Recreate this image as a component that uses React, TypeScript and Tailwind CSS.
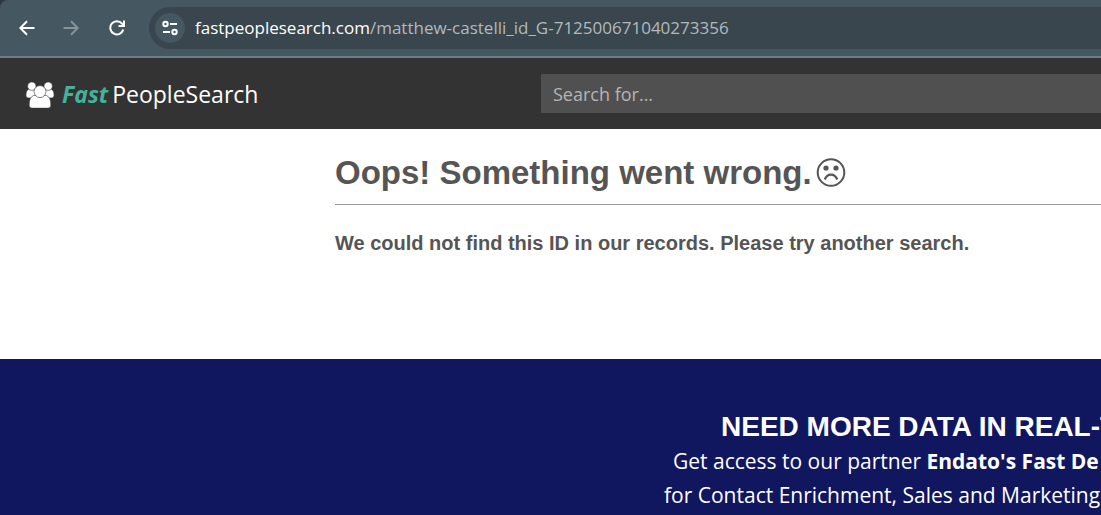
function PeopleIcon() {
  return (
    <svg viewBox="0 0 28 26" className="mt-0.5 h-[26px] w-7 shrink-0" fill="#fff" stroke="#333" strokeWidth="0.6" aria-hidden="true">
      <path d="M0 13.500C-.2 10.500.8 8.200 2.600 7.200h7c1.300 2 1.500 7.200-.2 8.800H3c-1.900 0-2.900-.8-3-2.500z" />
      <path d="M28 13.500c.2-3-.8-5.300-2.600-6.300h-7c-1.300 2-1.500 7.200.2 8.800H25c1.900 0 2.900-.8 3-2.500z" />
      <circle cx="5.800" cy="4.200" r="4.200" />
      <circle cx="22.200" cy="4.200" r="4.200" />
      <path d="M3.200 23.200C3 18 4.500 14.800 7.500 13.500h13c3 1.300 4.500 4.500 4.300 9.700-.1 2-1.200 3-3.300 3h-15c-2.100 0-3.200-1-3.300-3z" />
      <circle cx="14" cy="9.600" r="6" />
    </svg>
  );
}

function SadFace() {
  return (
    <svg viewBox="0 0 30 30" className="size-[30px]" fill="none" stroke="currentColor" strokeWidth="2" aria-hidden="true">
      <circle cx="15" cy="14.500" r="13.300" />
      <path d="M8.800 21.500c1.200-3.200 3.400-4.900 6.200-4.900s5 1.700 6.200 4.900" strokeWidth="2.300" />
      <circle cx="10" cy="10" r="2.600" fill="currentColor" stroke="none" />
      <circle cx="20" cy="10" r="2.600" fill="currentColor" stroke="none" />
    </svg>
  );
}

function BrowserBar() {
  return (
    <div className="flex items-center rounded-tl-lg border-b-2 border-[#6d7d85] bg-[#455760] py-[7px] pl-[15px] text-white">
      <button aria-label="Back" className="grid size-6 place-items-center">
        <svg viewBox="0 0 16 16" className="size-4" fill="none" stroke="currentColor" strokeWidth="2" aria-hidden="true">
          <path d="M15.500 8H1.500M8 1.300L1.300 8L8 14.700" />
        </svg>
      </button>
      <button aria-label="Forward" disabled className="ml-5 grid size-6 place-items-center text-[#87939a]">
        <svg viewBox="0 0 16 16" className="size-4" fill="none" stroke="currentColor" strokeWidth="2" aria-hidden="true">
          <path d="M.5 8H14.500M8 1.300L14.700 8L8 14.700" />
        </svg>
      </button>
      <button aria-label="Reload" className="ml-[22px] grid size-6 place-items-center">
        <svg viewBox="0 0 16 16" className="size-4" fill="none" stroke="currentColor" strokeWidth="2" aria-hidden="true">
          <path d="M14.300 9.500A6.600 6.600 0 1 1 13 3.600L14.500 5.500M15 .5V6H9.500" />
        </svg>
      </button>
      <div className="ml-5 flex h-[42px] flex-1 items-center rounded-l-full bg-[#39464d] pl-1.5">
        <button aria-label="Site information" className="grid size-[30px] shrink-0 place-items-center rounded-full bg-[#455760]">
          <svg viewBox="0 0 16 16" className="size-4" fill="none" stroke="currentColor" strokeWidth="2" aria-hidden="true">
            <circle cx="3.500" cy="4" r="2.200" />
            <path d="M8 4h7M1 12h7" />
            <circle cx="12.500" cy="12" r="2.200" />
          </svg>
        </button>
        <a href="#" className="ml-2.5 whitespace-nowrap text-[17px] text-[#b3b9bc]">
          <span className="text-white">fastpeoplesearch.com</span>/matthew-castelli_id_G-712500671040273356
        </a>
      </div>
    </div>
  );
}

export default function App() {
  return (
    <div className="min-h-screen overflow-hidden bg-[#2c383e] font-['Open_Sans','Noto_Sans',sans-serif]">
      <BrowserBar />

      <header className="flex items-center bg-[#333] py-4 pl-[26px]">
        <a href="#" className="flex w-[515px] shrink-0 items-center text-[23px] leading-7 text-white">
          <PeopleIcon />
          <span className="ml-2 font-bold text-[#43b39b] italic">Fast</span>
          <span className="ml-1">PeopleSearch</span>
        </a>
        <input
          type="text"
          aria-label="Search for"
          placeholder="Search for..."
          className="h-[39px] min-w-0 flex-1 bg-[#505050] px-3 text-lg text-white outline-none placeholder:text-[#b5b5b5]"
        />
      </header>

      <main className="bg-white pt-[26px] pb-[102px] pl-[335px] font-['Liberation_Sans',Arial,sans-serif] font-bold text-[#555]">
        <h1 className="flex items-center gap-1 border-b border-[#999] pb-3.5 text-[33px] leading-[35px]">
          Oops! Something went wrong.
          <SadFace />
        </h1>
        <p className="mt-6 text-xl leading-7">We could not find this ID in our records. Please try another search.</p>
      </main>

      <section className="flex flex-col bg-[#11175e] pt-[51px] pb-4 pl-[664px] text-[21px] leading-[34px] whitespace-nowrap text-white">
        <h2 className="pl-[57px] font-['Liberation_Sans',Arial,sans-serif] text-[28px] font-bold">NEED MORE DATA IN REAL-T</h2>
        <p className="pl-[9px]">
          Get access to our partner <strong>Endato's Fast De</strong>
        </p>
        <p>for Contact Enrichment, Sales and Marketing</p>
      </section>
    </div>
  );
}
